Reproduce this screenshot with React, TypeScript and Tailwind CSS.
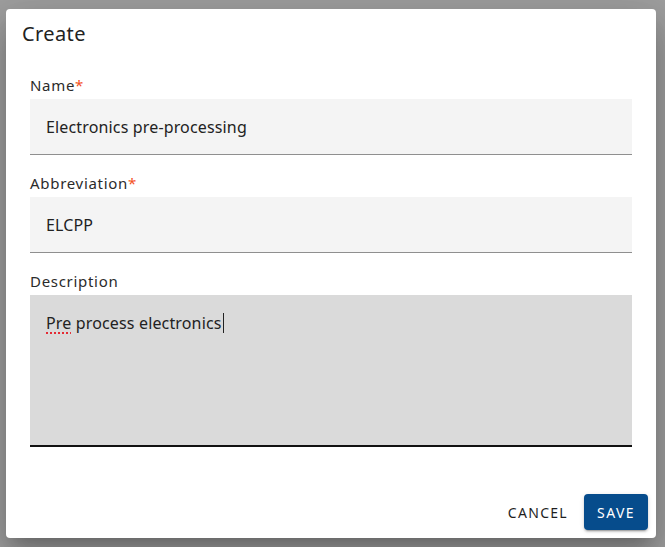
const font = { fontFamily: '"Noto Sans", "Open Sans", sans-serif' };

function Label({ text, required }: { text: string; required?: boolean }) {
  return (
    <div className="mb-1 h-5 text-[15px] leading-5 tracking-[0.7px] text-[#2b2b2b]">
      {text}
      {required && <span className="text-[#f4511e]">*</span>}
    </div>
  );
}

export default function App() {
  return (
    <div className="h-[547px] w-[665px] bg-[#9f9f9f] pl-[6px] pt-[9px]" style={font}>
      <div className="flex h-[529px] w-[650px] flex-col rounded bg-white shadow-[0_11px_15px_-7px_rgba(0,0,0,0.2),0_24px_38px_3px_rgba(0,0,0,0.14),0_9px_46px_8px_rgba(0,0,0,0.12)]">
        <h2 className="px-4 pt-[9px] text-[20px] font-normal leading-8 tracking-[0.4px] text-[#222]">Create</h2>
        <div className="mt-[25px] flex flex-col px-6">
          <Label text="Name" required />
          <div className="h-14 border-b border-[#8f8f8f] bg-[#f4f4f4] px-4 pt-4 text-[16px] leading-6 tracking-[0.15px] text-[#222]">
            Electronics pre-processing
          </div>
          <div className="mt-[18px]">
            <Label text="Abbreviation" required />
          </div>
          <div className="h-14 border-b border-[#8f8f8f] bg-[#f4f4f4] px-4 pt-4 text-[16px] leading-6 tracking-[0.15px] text-[#222]">
            ELCPP
          </div>
          <div className="mt-[18px]">
            <Label text="Description" />
          </div>
          <div className="h-[152px] border-b-2 border-[#111] bg-[#dadada] px-4 pt-[14px] text-[16px] leading-6 tracking-[0.15px] text-[#222]">
            <span className="underline decoration-red-600 decoration-dotted underline-offset-4">Pre</span> process
            electronics
            <span className="ml-px inline-block h-[20px] w-px translate-y-[4px] bg-[#222]" />
          </div>
        </div>
        <div className="mt-auto flex items-center justify-end gap-2 p-2">
          <button className="h-9 rounded px-2 text-[14px] font-normal uppercase tracking-[1.3px] text-[#1f1f1f]">
            Cancel
          </button>
          <button className="h-9 w-16 rounded bg-[#064c8c] text-[14px] font-normal uppercase tracking-[1.4px] text-white shadow-[0_3px_1px_-2px_rgba(0,0,0,0.2),0_2px_2px_0_rgba(0,0,0,0.14),0_1px_5px_0_rgba(0,0,0,0.12)]">
            Save
          </button>
        </div>
      </div>
    </div>
  );
}
